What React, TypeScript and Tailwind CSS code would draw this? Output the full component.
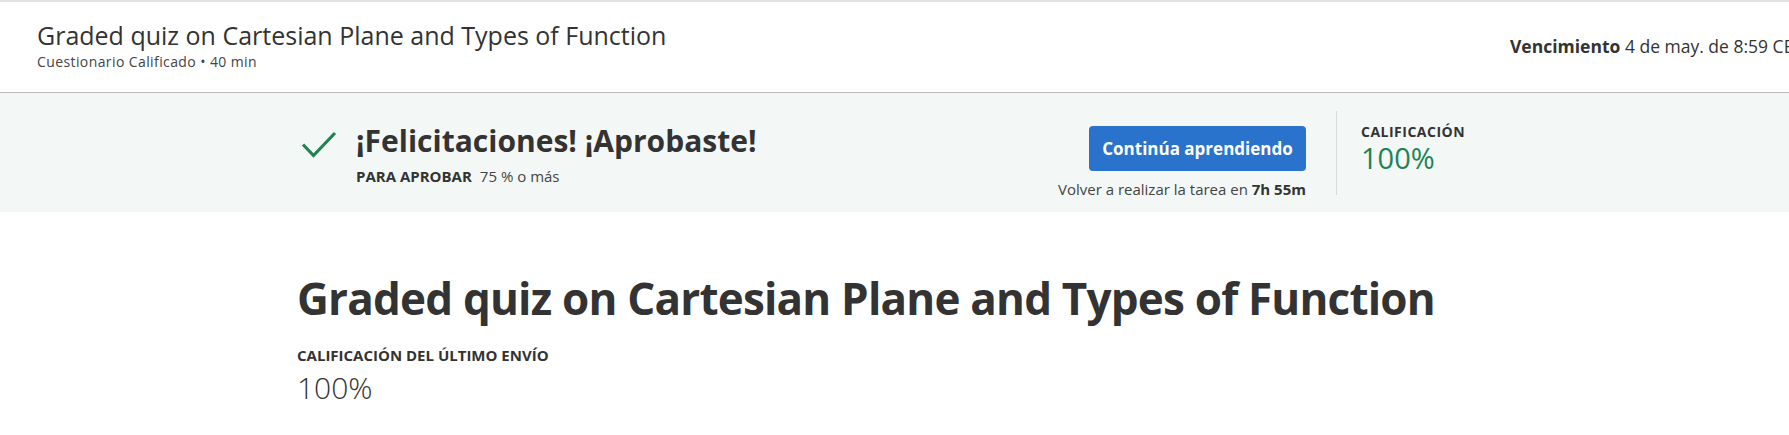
import React from "react";

function CheckMark() {
  return (
    <svg width="36" height="28" viewBox="0 0 36 28" fill="none" className="shrink-0">
      <polyline points="2,13.5 12.5,24.5 34,2" stroke="#1f8354" strokeWidth="3.2" fill="none" />
    </svg>
  );
}

export default function App() {
  return (
    <div className="min-h-[435px] w-full overflow-hidden bg-white font-['Open_Sans',sans-serif] text-[#333]">
      {/* top bar */}
      <header className="flex h-[93px] items-start border-t-2 border-b border-t-[#e1e1e6] border-b-[#bcbcbc] pl-[37px]">
        <div className="flex-1 pt-[17px]">
          <h1 className="text-[25px] leading-[32px] text-[#333]">Graded quiz on Cartesian Plane and Types of Function</h1>
          <p className="mt-[2px] text-[14px] leading-[18px] tracking-[0.4px] text-[#444]">Cuestionario Calificado • 40 min</p>
        </div>
        <div className="w-[279px] shrink-0 whitespace-nowrap pt-[32px] text-[17.5px] leading-[24px] text-[#333]">
          <span className="font-bold">Vencimiento</span> 4 de may. de 8:59 CET
        </div>
      </header>

      {/* result banner */}
      <section className="h-[119px] bg-[#f3f8f6]">
        <div className="mx-auto flex w-[1195px] items-start justify-between">
          <div className="flex items-start pl-[4px] pt-[38px]">
            <CheckMark />
            <div className="-mt-[8px] ml-[19px]">
              <h2 className="text-[30px] font-bold leading-[36px] text-[#333]">¡Felicitaciones! ¡Aprobaste!</h2>
              <p className="mt-[7px] text-[15px] leading-[20px] text-[#444]">
                <span className="font-bold text-[#333]">PARA APROBAR</span>
                <span className="ml-[8px]">75 % o más</span>
              </p>
            </div>
          </div>

          <div className="flex items-start">
            <div className="flex flex-col items-end pt-[33px]">
              <button className="h-[45px] w-[217px] rounded-[4px] bg-[#2a73cc] text-[17px] font-bold text-white">
                Continúa aprendiendo
              </button>
              <p className="mt-[8px] text-[15px] leading-[20px] text-[#444]">
                Volver a realizar la tarea en <span className="font-bold text-[#333]">7h 55m</span>
              </p>
            </div>
            <div className="ml-[30px] mt-[18px] h-[84px] w-px bg-[#dadada]" />
            <div className="w-[155px] pl-[24px] pt-[29px]">
              <div className="text-[14px] font-bold leading-[20px] tracking-[0.5px] text-[#333]">CALIFICACIÓN</div>
              <div className="text-[29px] leading-[32px] text-[#1f8354]">100%</div>
            </div>
          </div>
        </div>
      </section>

      {/* quiz body */}
      <main className="mx-auto w-[1195px] pt-[58px]">
        <h1 className="text-[44px] font-bold leading-[56px] tracking-[-0.8px] text-[#333]">
          Graded quiz on Cartesian Plane and Types of Function
        </h1>
        <div className="mt-[19px] text-[15px] font-bold leading-[20px] text-[#333]">CALIFICACIÓN DEL ÚLTIMO ENVÍO</div>
        <div className="mt-[5px] text-[30px] font-light leading-[36px] text-[#333]">100%</div>
      </main>
    </div>
  );
}
